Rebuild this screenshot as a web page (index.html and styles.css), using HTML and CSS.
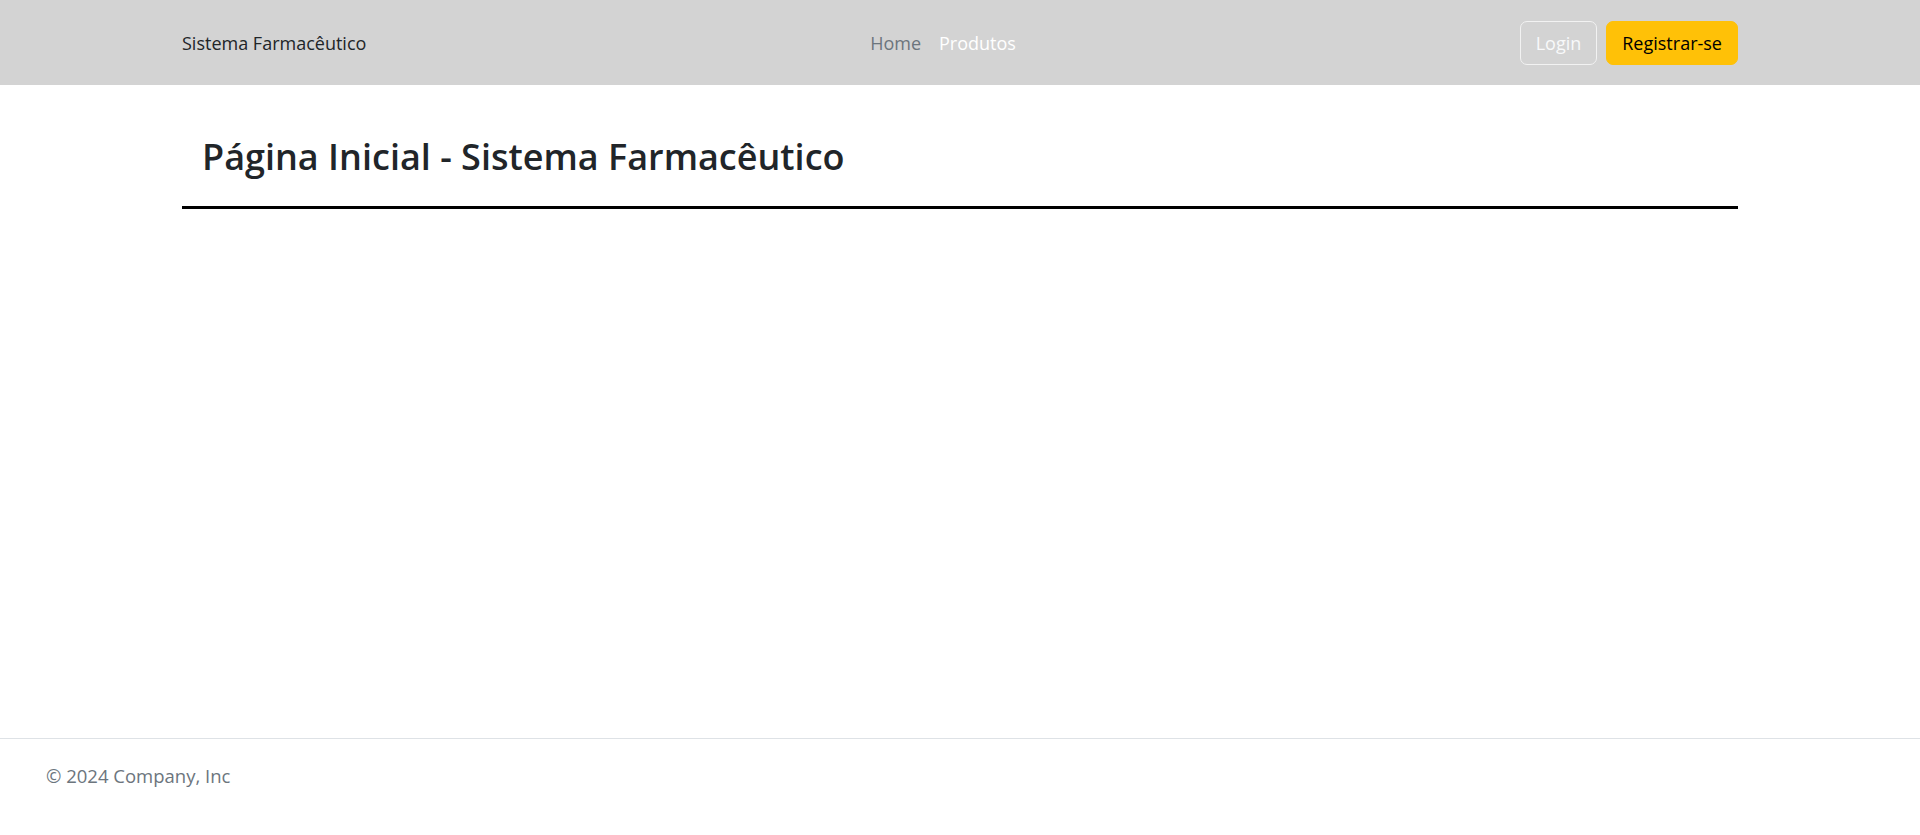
FILE: index.html
```html
<!DOCTYPE html>
<html lang="pt-BR">
<head>
<meta charset="utf-8">
<title>Sistema Farmacêutico</title>
<link rel="stylesheet" href="styles.css">
</head>
<body>
<header class="navbar">
  <div class="navbar-inner">
    <a class="brand" href="#">Sistema Farmacêutico</a>
    <nav class="nav">
      <a class="nav-link nav-link-muted" href="#">Home</a>
      <a class="nav-link nav-link-light" href="#">Produtos</a>
    </nav>
    <div class="actions">
      <button class="btn btn-outline" type="button">Login</button>
      <button class="btn btn-warning" type="button">Registrar-se</button>
    </div>
  </div>
</header>
<main class="main">
  <div class="page-header">
    <h1 class="page-title">Página Inicial - Sistema Farmacêutico</h1>
  </div>
</main>
<footer class="footer">
  <p class="footer-text">© 2024 Company, Inc</p>
</footer>
</body>
</html>
```
FILE: styles.css
```css
* { box-sizing: border-box; }
html, body { margin: 0; padding: 0; }
body {
  font-family: "Open Sans", "Noto Sans", sans-serif;
  font-size: 18px;
  line-height: 1.5;
  color: #212529;
  background: #fff;
  min-height: 100vh;
  display: flex;
  flex-direction: column;
}
a { text-decoration: none; }

.navbar {
  background: #d3d3d3;
  height: 85px;
  display: flex;
  align-items: center;
}
.navbar-inner {
  width: 1556px;
  margin: 0 auto;
  display: flex;
  align-items: center;
  justify-content: space-between;
}
.brand {
  color: #212529;
  font-size: 18px;
  line-height: 27px;
  padding-top: 2px;
}
.nav { display: flex; padding-top: 2px; }
.nav-link {
  padding: 0 9px;
  font-size: 18px;
  line-height: 27px;
}
.nav-link-muted { color: #6c757d; }
.nav-link-light { color: #ffffff; }

.actions { display: flex; gap: 9px; }
.btn {
  font-family: inherit;
  font-size: 18px;
  height: 44px;
  line-height: 42px;
  padding: 0 15px;
  border-radius: 7px;
  border: 1px solid transparent;
  cursor: pointer;
}
.btn-outline {
  background: transparent;
  border-color: #f2f2f2;
  color: #f8f9fa;
}
.btn-warning {
  background: #ffc107;
  border-color: #ffc107;
  color: #000;
}

.main { flex: 1; }
.page-header {
  width: 1556px;
  margin: 0 auto;
  padding: 50px 20px 28px;
  border-bottom: 3px solid #000;
}
.page-title {
  margin: 0;
  font-size: 36px;
  font-weight: 600;
  line-height: 43px;
  color: #212529;
}

.footer {
  border-top: 1px solid #dee2e6;
  padding: 24px 46px;
  margin-bottom: 22px;
}
.footer-text {
  margin: 0;
  font-size: 18.5px;
  line-height: 26px;
  color: #6c757d;
}
```
